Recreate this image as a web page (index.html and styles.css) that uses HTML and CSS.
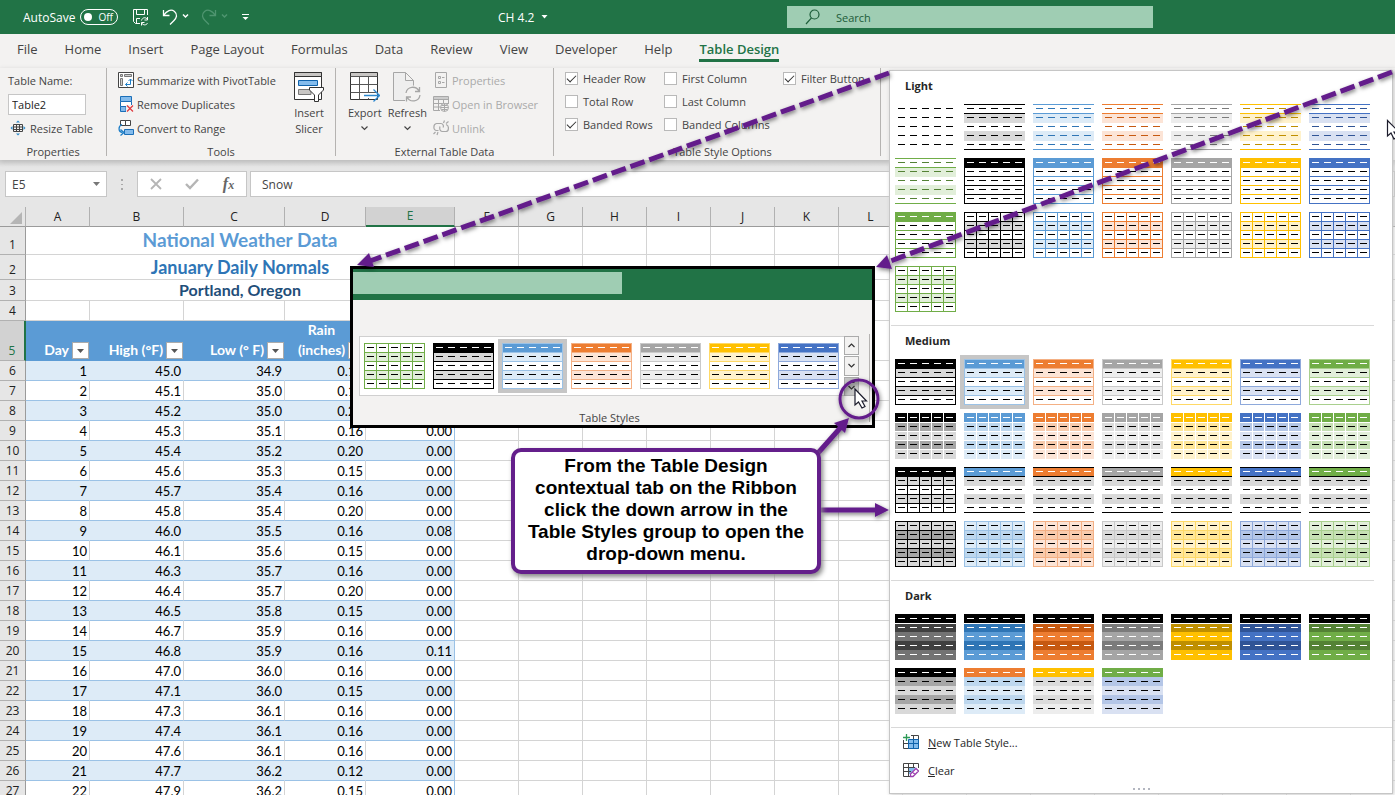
FILE: index.html
```html
<!DOCTYPE html>
<html lang="en">
<head>
<meta charset="utf-8">
<title>CH 4.2 - Excel</title>
<link rel="stylesheet" href="styles.css">
</head>
<body>
<div class="app">
  <header class="titlebar">
    <div class="quick">
      <span class="autosave">AutoSave</span>
      <button class="toggle" aria-label="AutoSave off"><span class="knob"></span>Off</button>
      <button class="tb-btn tb-save" aria-label="Save"><svg width="18" height="18" viewBox="0 0 18 18" fill="none" stroke="#fff"><path d="M8 15.500H3.500L1.500 13.500V1.500H15.500V7M4.500 1.500V6.500H12.500V1.500M4.500 15V10.500H8M15.500 9V12H12.500M9.500 17.500V14.500H12.500M9.500 12.500C10.500 9 14 9 15.500 11.500M15.500 15C14.500 17.500 11 17.500 9.500 14.800"/></svg></button>
      <button class="tb-btn tb-undo" aria-label="Undo"><svg width="27" height="18" viewBox="0 0 27 18" fill="none" stroke="#fff"><path stroke-width="1.300" d="M1.500 2V7.500H7.500M1.500 7.500C5 2.500 9 .800 12.500 3.500C16 6.500 14.500 10 12 12.500L8 16.500"/><path stroke-width="1.500" d="M21 6.500L23.500 9L26 6.500"/></svg></button>
      <button class="tb-btn tb-redo" aria-label="Redo"><svg width="27" height="18" viewBox="0 0 27 18" fill="none" stroke="#4f9570"><path stroke-width="1.300" d="M14.500 2V7.500H8.500M14.500 7.500C11 2.500 7 .800 3.500 3.500C0 6.500 1.500 10 4 12.500L8 16.500"/><path stroke-width="1.500" d="M21 6.500L23.500 9L26 6.500"/></svg></button>
      <button class="tb-btn" aria-label="Customize toolbar"><svg width="9" height="8" viewBox="0 0 9 8"><path d="M1 1.500H8" stroke="#fff"/><path d="M1.500 4H7.500L4.500 7Z" fill="#fff"/></svg></button>
    </div>
    <button class="doc-name">CH 4.2 <svg width="7" height="4" viewBox="0 0 7 4"><path d="M.5 0H6.500L3.500 3.500Z" fill="#fff"/></svg></button>
    <label class="search"><svg width="16" height="16" viewBox="0 0 16 16" fill="none" stroke="#1c5c38" stroke-width="1.200"><circle cx="9.500" cy="5.500" r="4.500"/><path d="M6.500 8.800L1 15"/></svg><input type="text" value="Search" aria-label="Search"></label>
  </header>

  <nav class="tabs">
    <button class="tab">File</button><button class="tab">Home</button><button class="tab">Insert</button><button class="tab">Page Layout</button><button class="tab">Formulas</button><button class="tab">Data</button><button class="tab">Review</button><button class="tab">View</button><button class="tab">Developer</button><button class="tab">Help</button><button class="tab active">Table Design</button>
  </nav>

  <section class="ribbon">
    <div class="group g-props">
      <div class="stack">
        <label class="line" for="tname">Table Name:</label>
        <div class="line"><input id="tname" class="tname" type="text" value="Table2"></div>
        <button class="line cmd resize"><svg width="16" height="16" viewBox="0 0 16 16" fill="none"><path d="M3.500 4.500H12.500V11.500H3.500ZM3.500 7H12.500M3.500 9.500H12.500M6.500 4.500V11.500M9.500 4.500V11.500" stroke="#444"/><path d="M6 2.500L8 .500L10 2.500ZM6 13.500L8 15.500L10 13.500ZM2.500 6L.500 8L2.500 10ZM13.500 6L15.500 8L13.500 10Z" fill="#2b88c8"/></svg>Resize Table</button>
      </div>
      <div class="caption">Properties</div>
    </div>

    <div class="group g-tools">
      <div class="cols">
        <div class="stack">
          <button class="line cmd"><svg width="16" height="16" viewBox="0 0 16 16" fill="none"><path d="M.5.500H15.500V15.500H.500Z" stroke="#444" fill="#fff"/><path d="M2.500 2.500H4.500V4.500H2.500ZM6.500 2.500H13.500V4.500H6.500ZM2.500 6.500H4.500V13.500H2.500Z" stroke="#777" fill="#ccc"/><path d="M7.500 12.500H12.500V7M10.500 9L12.500 7L14.500 9M9.500 10.500L7.500 12.500L9.500 14.500" stroke="#1e7fc8"/></svg>Summarize with PivotTable</button>
          <button class="line cmd"><svg width="16" height="16" viewBox="0 0 16 16"><path d="M2.500.500H13.500V5.500H2.500Z" fill="#83bbec" stroke="#1b6fb8"/><path d="M2.500 5.500H13.500V10.500H2.500Z" fill="#fff" stroke="#1b6fb8"/><path d="M2.500 10.500H8V15.500H2.500Z" fill="#83bbec" stroke="#1b6fb8"/><path d="M8 9H16V16H8Z" fill="#f3f2f1"/><path d="M9 9.500L15 15.500M15 9.500L9 15.500" stroke="#e0393e" stroke-width="1.200"/></svg>Remove Duplicates</button>
          <button class="line cmd"><svg width="16" height="16" viewBox="0 0 16 16" fill="none"><path d="M2.500.500H7.500V5.500H2.500ZM7.500.500H12.500V5.500H7.500Z" fill="#fff" stroke="#444"/><path d="M6.500 9.500H15.500V14.500H6.500Z" fill="#83bbec" stroke="#1b6fb8"/><path d="M4 4.500C0 6 0 12 4.500 12.500M2.500 9.500L6 12.500L2.500 15.500" stroke="#1e7fc8" stroke-width="1.300"/></svg>Convert to Range</button>
        </div>
        <button class="big"><svg width="30" height="30" viewBox="0 0 30 30"><path d="M.5.500H27.500V27.500H.500Z" fill="#fff" stroke="#333"/><path d="M.5.500H27.500V4.500H.500Z" fill="#c8c6c4" stroke="#333"/><path d="M4.500 8.500H23.500V13.500H4.500Z" fill="#83bbec" stroke="#0f62ab"/><path d="M4.500 17.500H17V22.500H4.500Z" fill="#c8c6c4" stroke="#777"/><path d="M15.500 15.500H29.500V18L24.500 23V29.500H20.500V23L15.500 18Z" fill="#fff" stroke="#333"/></svg><span>Insert<br>Slicer</span></button>
      </div>
      <div class="caption">Tools</div>
    </div>

    <div class="group g-ext">
      <div class="cols">
        <button class="big"><svg width="30" height="30" viewBox="0 0 30 30" fill="none"><path d="M.5.500H27.500V27.500H.500Z" fill="#fff" stroke="#333"/><path d="M1 1H27V4H1Z" fill="#c8c6c4"/><path d="M.5 4.500H27.500M.5 12.500H27.500M.5 20.500H27.500M9.500 4.500V27.500M18.500 4.500V27.500" stroke="#555"/><path d="M15 21H27V26H15Z" fill="#fff"/><path d="M14 23.500H29M23.500 17.500L29.500 23.500L23.500 29.500" stroke="#2b88d0" stroke-width="1.300"/></svg><span>Export</span><svg class="chev" width="7" height="5" viewBox="0 0 7 5"><path d="M.5.500L3.500 3.500L6.500.500" fill="none" stroke="#444" stroke-width="1.200"/></svg></button>
        <button class="big"><svg width="28" height="30" viewBox="0 0 28 30" fill="none"><path d="M12 28.500H.500V.500H12.500L20.500 8.500V14M12.500.500V8.500H20.500" stroke="#a6a6a6" fill="#eeeeee"/><circle cx="20" cy="22" r="8.500" fill="#f3f2f1"/><path d="M13 21C14 14 23 13.500 26 19M26.500 15V19.500H22M27 23C26 30 17 31 14 25M13.500 29.500V25H18" stroke="#a6a6a6" stroke-width="1.300"/></svg><span>Refresh</span><svg class="chev" width="7" height="5" viewBox="0 0 7 5"><path d="M.5.500L3.500 3.500L6.500.500" fill="none" stroke="#444" stroke-width="1.200"/></svg></button>
        <div class="stack dim">
          <button class="line cmd" disabled><svg width="16" height="16" viewBox="0 0 16 16" fill="none" stroke="#a8a8a8"><path d="M2.500.500H13.500V15.500H2.500ZM5.500 4.500H7.500V6.500H5.500ZM5.500 9.500H7.500V11.500H5.500ZM9 5.500H11.500M9 10.500H11.500"/></svg>Properties</button>
          <button class="line cmd" disabled><svg width="16" height="16" viewBox="0 0 16 16" fill="none" stroke="#a8a8a8"><path d="M.5.500H15.500V8M.5.500V14.500H7M.5 3.500H15.500M.5 7.500H15M.5 11H7M5.500 3.500V14.500M10.500 3.500V8"/><path d="M1 1H15V3H1Z" fill="#ccc" stroke="none"/><circle cx="11.500" cy="11.500" r="4" fill="#f3f2f1"/><path d="M7.500 11.500H15.500M11.500 7.500V15.500M8.500 9.500H14.500M8.500 13.500H14.500"/></svg>Open in Browser</button>
          <button class="line cmd" disabled><svg width="16" height="16" viewBox="0 0 16 16" fill="none" stroke="#a8a8a8" stroke-width="1.200"><path d="M5.500 10.500H3.500C0 10.500 0 4 3.500 3.500H8C10 3.500 11 6 10 7.500M7 6.500C6 10 8 11.500 9.500 11.500H13C16 11.500 16.500 5.500 13 4.500M10.500 3L11.500.500M13 3.500L15.500 1.500M5 12L4 15M2.500 12L.500 14"/></svg>Unlink</button>
        </div>
      </div>
      <div class="caption">External Table Data</div>
    </div>

    <div class="group g-opts">
      <div class="checks">
        <label><input type="checkbox" checked>Header Row</label>
        <label><input type="checkbox">First Column</label>
        <label><input type="checkbox" checked>Filter Button</label>
        <label><input type="checkbox">Total Row</label>
        <label><input type="checkbox">Last Column</label>
        <span></span>
        <label><input type="checkbox" checked>Banded Rows</label>
        <label><input type="checkbox">Banded Columns</label>
      </div>
      <div class="caption">Table Style Options</div>
    </div>
  </section>

  <div class="formula-bar">
    <button class="name-box">E5<svg width="7" height="4" viewBox="0 0 7 4"><path d="M0 0H7L3.500 4Z" fill="#777"/></svg></button>
    <span class="grip"><i></i><i></i><i></i></span>
    <div class="fx-box">
      <button aria-label="Cancel"><svg width="12" height="12" viewBox="0 0 12 12"><path d="M1 1L11 11M11 1L1 11" stroke="#b5b5b5" stroke-width="1.800"/></svg></button>
      <button aria-label="Enter"><svg width="14" height="12" viewBox="0 0 14 12"><path d="M1 6L5 10L13 1.500" fill="none" stroke="#b5b5b5" stroke-width="2.400"/></svg></button>
      <button class="fx" aria-label="Insert function">f<small>x</small></button>
    </div>
    <input class="formula" type="text" value="Snow" aria-label="Formula">
  </div>

  <main class="sheet">
    <table class="grid" id="grid"></table>
  </main>
</div>

<section class="inset">
  <div class="inset-top"><div class="inset-search"></div></div>
  <div class="inset-body">
    <div class="gallery">
      <div class="gallery-items" id="gallery"></div>
      <div class="scroller">
        <button aria-label="Scroll up"><svg width="7" height="5" viewBox="0 0 7 5"><path d="M.5 4L3.500 1L6.500 4" fill="none" stroke="#333" stroke-width="1.200"/></svg></button>
        <button aria-label="Scroll down"><svg width="7" height="5" viewBox="0 0 7 5"><path d="M.5 1L3.500 4L6.500 1" fill="none" stroke="#333" stroke-width="1.200"/></svg></button>
        <button class="more" aria-label="More styles"><svg width="7" height="8" viewBox="0 0 7 8"><path d="M.5.500H6.500M.5 4L3.500 7L6.500 4" fill="none" stroke="#333" stroke-width="1.200"/></svg></button>
      </div>
    </div>
    <div class="inset-rule"></div>
    <div class="inset-caption">Table Styles</div>
  </div>
</section>

<section class="menu">
  <h2>Light</h2><div class="swatches" id="light"></div>
  <hr>
  <h2>Medium</h2><div class="swatches" id="medium"></div>
  <hr>
  <h2>Dark</h2><div class="swatches" id="dark"></div>
  <hr class="full">
  <button class="item"><svg width="16" height="16" viewBox="0 0 16 16" fill="none"><path d="M8 1.500H15.500V14.500H.500V6M10.500 1.500V5M5.500 6V14.500M.5 9.500H5M7 5.500H15" stroke="#444"/><path d="M5.500 5.500H15.500V14.500H5.500Z" fill="#83bbec"/><path d="M5.500 5.500H15.500V14.500H5.500ZM10.500 5.500V14.500M5.500 9.500H15.500" stroke="#0f62ab"/><path d="M3.500 0V7M0 3.500H7" stroke="#2e9a57" stroke-width="1.300"/></svg><span><u>N</u>ew Table Style...</span></button>
  <button class="item"><svg width="16" height="16" viewBox="0 0 16 16" fill="none"><path d="M.5 1.500H15.500V14.500H.500Z" fill="#fff"/><path d="M5.500 5.500H13L7 12H5.500Z" fill="#83bbec"/><path d="M7 14.500H.500V1.500H15.500V6M.5 5.500H12M.5 9.500H8M5.500 1.500V14.500M10.500 1.500V6" stroke="#444"/><path d="M7.500 12L13 6.500L15.500 9L10 14.500L7.500 14.500ZM9.500 10L12 12.500" fill="#fff" stroke="#9b3fae" stroke-width="1.300"/></svg><span><u>C</u>lear</span></button>
  <div class="dots"><i></i><i></i><i></i><i></i></div>
</section>

<svg class="marks" width="1395" height="795" viewBox="0 0 1395 795">
  <defs><filter id="soft" x="-5%" y="-5%" width="110%" height="110%"><feDropShadow dx="1" dy="2" stdDeviation="2" flood-opacity=".5"/></filter></defs>
  <g filter="url(#soft)" stroke="#641f8b" stroke-width="5" fill="none">
    <path stroke-dasharray="15 5" d="M889 73L370 261"/>
    <path stroke-dasharray="15 5" d="M1392 72L888 262"/>
    <path d="M818 453L842 426M821 510H876"/>
    <g fill="#641f8b" stroke="none"><path d="M357 265L369 253L374 267Z"/><path d="M876 267L887 255L892 269Z"/><path d="M849 418L845 433L834 423Z"/><path d="M889 510L875 503V517Z"/></g>
    <circle cx="859" cy="399" r="19" stroke-width="3"/>
  </g>
  <g fill="#fff" stroke="#1c1c2c" stroke-width="1.200"><path d="M855 389V405L858.500 402L862 408L865 406.500L862 401H866.500Z"/><path d="M1387.500 120.500V136L1391 133L1394 139L1397 137L1394 132H1399Z"/></g>
</svg>

<div class="callout">From the Table Design<br>contextual tab on the Ribbon<br>click the down arrow in the<br>Table Styles group to open the<br>drop-down menu.</div>
<script src="script.js"></script>
</body>
</html>
```
FILE: styles.css
```css
* { box-sizing: border-box; }
body { margin: 0; height: 100vh; overflow: hidden; position: relative; font-family: "Open Sans", "Noto Sans", sans-serif; font-size: 12px; color: #444; }
button { font: inherit; color: inherit; background: none; border: 0; padding: 0; margin: 0; text-align: left; }
input { font: inherit; color: inherit; margin: 0; }
svg { display: block; flex: none; }
.app { height: 100vh; display: flex; flex-direction: column; overflow: hidden; background: #e6e6e6; }

.titlebar { display: grid; grid-template-columns: 498px 289px 366px 1fr; align-items: center; height: 34px; flex: none; background: #217346; color: #fff; }
.quick { display: flex; align-items: center; padding-left: 23px; }
.toggle { display: flex; align-items: center; gap: 6px; width: 38px; height: 16px; margin-left: 5px; padding-left: 3px; border: 1px solid #fff; border-radius: 8px; font-size: 10px; line-height: 14px; }
.knob { width: 8px; height: 8px; border-radius: 50%; background: #fff; }
.tb-save { margin-left: 14px; }
.tb-undo { margin-left: 12px; }
.tb-redo { margin: 0 13px 0 12px; }
.doc-name { display: flex; align-items: center; gap: 7px; height: 32px; }
.search { display: flex; align-items: center; gap: 15px; height: 22px; padding-left: 18px; background: #9fcdb3; font-size: 11px; }
.search input { border: 0; background: none; padding: 0; color: #1c5c38; }

.tabs { display: flex; gap: 27px; padding-left: 17px; height: 34px; flex: none; background: #f3f2f1; font-size: 13px; }
.tab { height: 28px; padding-top: 4px; border-bottom: 3px solid transparent; white-space: nowrap; }
.tab.active { color: #217346; font-weight: 600; border-color: #217346; }

.ribbon { display: flex; height: 92px; flex: none; background: #f3f2f1; box-shadow: 0 2px 5px #bbb; position: relative; font-size: 11px; }
.group { display: flex; flex-direction: column; height: 88px; border-right: 1px solid #b5b3b1; }
.g-props { width: 107px; padding-left: 8px; }
.g-tools { width: 229px; padding-left: 11px; }
.g-ext { width: 218px; padding-left: 12px; }
.g-opts { width: 327px; padding-left: 11px; }
.stack { display: flex; flex-direction: column; }
.cols { display: flex; justify-content: space-between; }
.line { display: flex; align-items: center; height: 24px; white-space: nowrap; }
.cmd { gap: 3px; }
.resize { gap: 4px; padding-left: 2px; }
.dim { color: #aaa; }
.tname { width: 78px; height: 21px; border: 1px solid #c6c6c6; background: #fff; padding: 0 3px; color: #222; }
.caption { margin-top: auto; height: 16px; line-height: 24px; text-align: center; }
.g-props .caption { margin-left: -8px; }
.g-tools .caption { margin-left: -11px; }
.g-ext .caption { margin-left: -12px; }
.big { display: flex; flex-direction: column; align-items: center; text-align: center; line-height: 16px; padding-top: 4px; }
.big span { margin-top: 3px; }
.g-tools .big { margin-right: 11px; }
.g-ext .cols { justify-content: flex-start; gap: 6px; }
.chev { margin-top: 5px; }
.checks { display: grid; grid-template-columns: 99px 119px 1fr; grid-auto-rows: 23px; }
.checks label { display: flex; align-items: center; gap: 5px; height: 20px; white-space: nowrap; }
.checks input { appearance: none; width: 13px; height: 13px; border: 1px solid #b9b9b9; background: #fff; display: grid; place-items: start center; }
.checks input:checked::before { content: ""; width: 4px; height: 8px; border: solid #333; border-width: 0 1px 1px 0; transform: rotate(45deg); }

.formula-bar { display: flex; height: 47px; padding: 11px 0 9px 5px; flex: none; background: linear-gradient(#d2d2d2, #e6e6e6 7px); }
.name-box { display: flex; justify-content: space-between; align-items: center; width: 102px; height: 26px; padding: 0 6px; border: 1px solid #c6c6c6; background: #fff; }
.grip { display: flex; flex-direction: column; gap: 3px; width: 30px; padding: 8px 14px; }
.grip i { width: 2px; height: 2px; background: #aaa; }
.fx-box { display: flex; justify-content: space-around; align-items: center; width: 110px; height: 26px; border: 1px solid #c6c6c6; background: #fff; margin-right: 3px; }
.fx { font-family: "Liberation Serif", serif; font-style: italic; font-weight: bold; font-size: 16px; line-height: 20px; color: #666; }
.fx small { font-size: 12px; }
.formula { flex: 1; height: 26px; border: 1px solid #c6c6c6; background: #fff; padding: 0 11px; }

.sheet { flex: 1; overflow: hidden; background: #fff; }
.grid { width: 1415px; table-layout: fixed; border-collapse: separate; border-spacing: 0; font-family: Lato, Carlito, sans-serif; font-size: 13px; color: #000; }
.grid th, .grid td { padding: 0 2px 1px; height: 20px; line-height: 16px; border-right: 1px solid #d4d4d4; border-bottom: 1px solid #d4d4d4; overflow: hidden; white-space: nowrap; }
.grid td { text-align: right; vertical-align: bottom; }
.grid .col, .grid .row { background: #e6e6e6; font-family: "Open Sans", sans-serif; font-weight: 400; font-size: 12px; color: #222; text-align: center; border-color: #b1b1b1; }
.grid .col { padding-bottom: 0; border-bottom-color: #9b9b9b; }
.grid .row { border-right-color: #9b9b9b; vertical-align: bottom; }
.grid .corner svg { margin: 3px 0 0 8px; }
.grid .col.on { background: #d2d2d2; color: #217346; border-bottom: 2px solid #217346; }
.grid .row.on { background: #d2d2d2; color: #217346; border-right: 2px solid #217346; }
.grid .heading { text-align: center; font-weight: 700; vertical-align: middle; }
.grid .h1 { height: 28px; font-size: 19px; color: #5b9bd5; }
.grid .h2 { height: 25px; font-size: 18px; color: #2e75b6; }
.grid .h3 { height: 21px; font-size: 16px; color: #1f4e79; }
.grid .head { height: 40px; padding: 0 2px; line-height: 20px; background: #5b9bd5; border-color: #5b9bd5; color: #fff; font-size: 14px; font-weight: 700; vertical-align: bottom; }
.head div { display: flex; justify-content: flex-end; align-items: flex-end; gap: 3px; height: 39px; }
.head span { text-align: center; }
.filter { display: grid; place-items: center; flex: none; width: 17px; height: 17px; border: 1px solid #ababab; background: #fff; margin: 0 -2px 1px 0; }
.grid .rec { border-bottom-color: #9bc2e6; }
.grid .band { background: #ddebf7; border-right-color: #ddebf7; }
.grid .edge { border-right-color: #9bc2e6; }

.inset { position: absolute; left: 350px; top: 266px; width: 525px; border: 3px solid #000; background: #f3f2f1; }
.inset-top { height: 31px; background: #217346; padding-top: 3px; }
.inset-search { width: 269px; height: 22px; background: #9fcdb3; }
.inset-body { display: grid; grid-template-columns: 1fr 1px; padding: 34px 2px 0 6px; height: 125px; }
.gallery { grid-row: 1; grid-column: 1; display: flex; height: 60px; width: 500px; margin-top: 2px; border: 1px solid #d0d0d0; border-right: 0; background: #fff; }
.gallery-items { display: flex; padding-top: 2px; }
.scroller { display: flex; flex-direction: column; gap: 1px; width: 15px; margin: -1px 0 -1px 1px; }
.scroller button { flex: 1; display: grid; place-items: center; border: 1px solid #ababab; background: #f3f2f1; }
.scroller .more { background: #c4c4c4; }
.inset-rule { grid-row: 1; grid-column: 2; height: 88px; background: #b5b3b1; }
.inset-caption { grid-row: 1; grid-column: 1; align-self: end; padding-right: 9px; text-align: center; font-size: 11px; line-height: 14px; }

.menu { position: absolute; left: 889px; top: 70px; width: 504px; border: 1px solid #c6c6c6; background: #fff; padding-left: 1px; color: #262626; box-shadow: 1px 1px 4px #ccc; font-size: 11px; }
.menu h2 { margin: 0; padding: 5px 0 4px 14px; font-size: 11px; font-weight: 700; line-height: 20px; }
.swatches { display: grid; grid-template-columns: repeat(7, 69px); grid-auto-rows: 54px; }
.swatch { display: block; width: 69px; height: 54px; padding: 4px; }
.swatch.selected { background: #c6c6c6; }
.menu hr { margin: 9px 18px 0 0; border: 0; border-top: 1px solid #d9d9d9; }
.menu hr.full { margin-right: 0; }
.item { display: flex; align-items: center; gap: 9px; width: 100%; height: 28px; padding-left: 12px; }
.dots { display: flex; gap: 3px; height: 9px; justify-content: center; align-items: center; }
.dots i { width: 2px; height: 2px; background: #b3b6c0; }

.marks { position: absolute; left: 0; top: 0; pointer-events: none; }
.callout { position: absolute; left: 511px; top: 448px; width: 310px; border: 4px solid #641f8b; border-radius: 10px; background: #fff; padding: 3px 0 5px; text-align: center; font: bold 19px/22px "Liberation Sans", Arial, sans-serif; color: #000; box-shadow: 2px 3px 5px #888; }
```
FILE: script.js
```javascript
// Theme colours: main, light tint, mid tint, border tint, dark shade
const theme = {
  black:  { main: '#000000', light: '#d9d9d9', mid: '#a6a6a6', line: '#000000', dark: '#000000' },
  sky:    { main: '#5b9bd5', light: '#ddebf7', mid: '#bdd7ee', line: '#9bc2e6', dark: '#2f75b5' },
  orange: { main: '#ed7d31', light: '#fce4d6', mid: '#f8cbad', line: '#f4b084', dark: '#c65911' },
  gray:   { main: '#a5a5a5', light: '#ededed', mid: '#dbdbdb', line: '#c9c9c9', dark: '#7b7b7b' },
  gold:   { main: '#ffc000', light: '#fff2cc', mid: '#ffe699', line: '#ffd966', dark: '#bf8f00' },
  blue:   { main: '#4472c4', light: '#d9e1f2', mid: '#b4c6e7', line: '#8ea9db', dark: '#305496' },
  green:  { main: '#70ad47', light: '#e2efda', mid: '#c6e0b4', line: '#a9d08e', dark: '#548235' }
};
const order = ['black', 'sky', 'orange', 'gray', 'gold', 'blue', 'green'];

function rect(x, y, w, h, c) {
  return `<rect x="${x}" y="${y}" width="${w}" height="${h}" fill="${c}"/>`;
}

// A swatch is five 9px rows on a 61x46 picture
function swatch(o, selected) {
  let s = '';
  (o.fills || []).forEach((c, i) => { if (c) s += rect(0, i * 9, 61, 10, c); });
  (o.v || []).forEach(i => { s += rect(i * 12, o.vTop || 0, 1, 46 - (o.vTop || 0), o.line); });
  (o.h || []).forEach(i => { s += rect(0, i * 9, 61, 1, o.line); });
  for (let r = 0; r < 5; r++) {
    const c = r === 0 ? (o.headDash || o.dash || '#000') : (o.dash || '#000');
    for (let k = 0; k < 5; k++) s += rect(3 + k * 12, 4 + r * 9, 7, 1, c);
  }
  return `<button class="swatch${selected ? ' selected' : ''}" aria-label="Table style"><svg width="61" height="46" viewBox="0 0 61 46" shape-rendering="crispEdges">${s}</svg></button>`;
}

const all = [0, 1, 2, 3, 4, 5];
const ruled = t => swatch({ fills: [0, t.light, 0, t.light], h: [0, 1, 5], line: t.main, dash: t.dark });
const outlined = t => swatch({ fills: [t.main], h: all, v: [0, 5], line: t.main, headDash: '#fff' });
const gridded = t => swatch({ fills: [0, t.light, 0, t.light], h: all, v: all, line: t.main });
const banded = (t, sel) => swatch({ fills: [t.main, t.light, '#fff', t.light, '#fff'], h: all, v: [0, 5], line: t.line, headDash: '#fff' }, sel);
const tiled = t => swatch({ fills: [t.main, t.mid, t.light, t.mid, t.light], h: [1, 2, 3, 4], v: [1, 2, 3, 4], line: '#fff', headDash: '#fff' });
const capped = t => swatch({ fills: [t.main, '#d9d9d9', 0, '#d9d9d9'], h: t === theme.black ? all : [0, 1, 5], v: t === theme.black ? all : [], vTop: 9, line: '#000', headDash: '#fff' });
const filled = t => swatch({ fills: [t.light, t.mid, t.light, t.mid, t.light], h: all, v: all, line: t.line });
const dark = t => {
  const a = t === theme.black ? '#404040' : t.dark, b = t === theme.black ? '#737373' : t.main;
  return swatch({ fills: ['#000', a, b, a, b], h: [1], line: '#fff', dash: '#fff' });
};
const duo = (a, b) => swatch({ fills: [a.main, b.mid, b.light, b.mid, b.light], headDash: '#fff' });

const T = order.map(n => theme[n]);
const put = (id, html) => { document.getElementById(id).innerHTML = html; };
put('light', swatch({}) + T.map(ruled).join('') + T.map(outlined).join('') + T.map(gridded).join(''));
put('medium', T.map((t, i) => banded(t, i === 1)).join('') + T.map(tiled).join('') + T.map(capped).join('') + T.map(filled).join(''));
put('dark', T.map(dark).join('') + duo(theme.black, theme.black) + duo(theme.orange, theme.sky) + duo(theme.gold, theme.gray) + duo(theme.green, theme.blue));
put('gallery', gridded(theme.green) + T.slice(0, 6).map((t, i) => banded(t, i === 1)).join(''));

// Worksheet
const data = [
  ['45.0', '34.9', '0.16', '0.00'], ['45.1', '35.0', '0.15', '0.00'], ['45.2', '35.0', '0.20', '0.00'],
  ['45.3', '35.1', '0.16', '0.00'], ['45.4', '35.2', '0.20', '0.00'], ['45.6', '35.3', '0.15', '0.00'],
  ['45.7', '35.4', '0.16', '0.00'], ['45.8', '35.4', '0.20', '0.00'], ['46.0', '35.5', '0.16', '0.08'],
  ['46.1', '35.6', '0.15', '0.00'], ['46.3', '35.7', '0.16', '0.00'], ['46.4', '35.7', '0.20', '0.00'],
  ['46.5', '35.8', '0.15', '0.00'], ['46.7', '35.9', '0.16', '0.00'], ['46.8', '35.9', '0.16', '0.11'],
  ['47.0', '36.0', '0.16', '0.00'], ['47.1', '36.0', '0.15', '0.00'], ['47.3', '36.1', '0.16', '0.00'],
  ['47.4', '36.1', '0.16', '0.00'], ['47.6', '36.1', '0.16', '0.00'], ['47.7', '36.2', '0.12', '0.00'],
  ['47.9', '36.2', '0.15', '0.00']
];
const letters = 'ABCDEFGHIJKLMNOPQRST'.split('');
const widths = [26, 64, 94, 101, 81, 89].concat(Array(15).fill(64));
const rest = '<td></td>'.repeat(15);
const filter = '<button class="filter" aria-label="Filter"><svg width="7" height="4" viewBox="0 0 7 4"><path d="M0 0H7L3.500 4Z" fill="#555"/></svg></button>';
const head = t => `<th class="head"><div><span>${t}</span>${filter}</div></th>`;

let g = '<colgroup>' + widths.map(w => `<col style="width:${w}px">`).join('') + '</colgroup><tr><th class="col corner"><svg width="12" height="12" viewBox="0 0 12 12"><path d="M12 0V12H0Z" fill="#b5b5b5"/></svg></th>';
g += letters.map(l => `<th class="col${l === 'E' ? ' on' : ''}">${l}</th>`).join('') + '</tr>';
['National Weather Data', 'January Daily Normals', 'Portland, Oregon'].forEach((t, i) => {
  g += `<tr><th class="row">${i + 1}</th><td colspan="5" class="heading h${i + 1}">${t}</td>${rest}</tr>`;
});
g += `<tr><th class="row">4</th>${'<td></td>'.repeat(5)}${rest}</tr>`;
g += `<tr><th class="row on">5</th>${head('Day')}${head('High (°F)')}${head('Low (° F)')}${head('Rain<br>(inches)')}${head('Snow<br>(inches)')}${rest}</tr>`;
data.forEach((r, i) => {
  const band = i % 2 ? '' : ' band';
  g += `<tr><th class="row">${i + 6}</th>` + [i + 1].concat(r).map((v, k) => `<td class="rec${band}${k === 4 ? ' edge' : ''}">${v}</td>`).join('') + rest + '</tr>';
});
put('grid', g);
```
